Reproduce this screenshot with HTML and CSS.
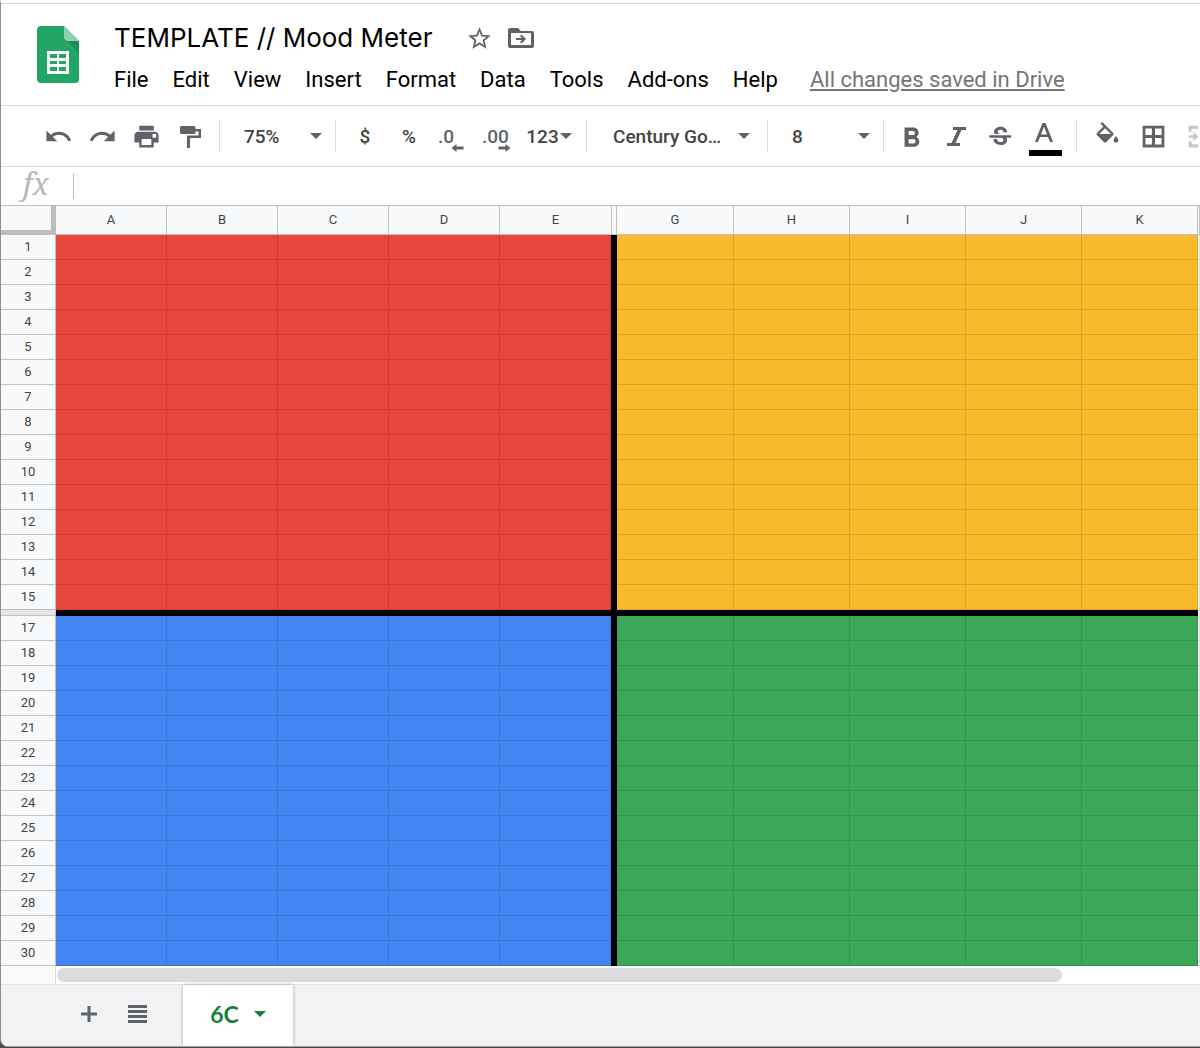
FILE: index.html
```html
<!DOCTYPE html>
<html lang="en">
<head>
    <meta charset="UTF-8">
    <meta name="viewport" content="width=device-width, initial-scale=1.0">
    <title>TEMPLATE // Mood Meter</title>
    <link rel="stylesheet" href="styles.css">
</head>
<body>
    <div class="window">
        <header class="header">
            <svg class="logo" viewBox="0 0 42 57" aria-hidden="true">
                <path fill="#23a566" d="M4 0h23l15 15v38a4 4 0 0 1-4 4H4a4 4 0 0 1-4-4V4a4 4 0 0 1 4-4z"/>
                <path fill="#1c8f57" d="M29 14l13 13V15z"/>
                <path fill="#8ed1b1" d="M27 0l15 15H31a4 4 0 0 1-4-4z"/>
                <path fill="#fff" d="M10 25h22v23H10z"/>
                <path fill="#23a566" d="M13 28h7v4h-7zM22 28h7v4h-7zM13 35h7v3h-7zM22 35h7v3h-7zM13 41h7v4h-7zM22 41h7v4h-7z"/>
            </svg>
            <div class="header-main">
                <div class="title-row">
                    <h1>TEMPLATE // Mood Meter</h1>
                    <button class="title-btn" type="button" aria-label="Star">
                        <svg width="27" height="27" viewBox="0 0 24 24"><path d="M22 9.24l-7.19-.62L12 2 9.19 8.63 2 9.24l5.46 4.73L5.82 21 12 17.27 18.18 21l-1.63-7.03L22 9.24zM12 15.4l-3.76 2.27 1-4.28-3.32-2.88 4.38-.38L12 6.1l1.71 4.04 4.38.38-3.32 2.88 1 4.28L12 15.4z"/></svg>
                    </button>
                    <button class="title-btn" type="button" aria-label="Move">
                        <svg width="26" height="22" viewBox="0 0 26 22"><path fill-rule="evenodd" d="M2 1h8l3 3h11a2 2 0 0 1 2 2v13a2 2 0 0 1-2 2H2a2 2 0 0 1-2-2V3a2 2 0 0 1 2-2zM3 6v12h20V6zM8 11h6l-2-2 1.500-1.500L18 12l-4.500 4.500L12 15l2-2H8z"/></svg>
                    </button>
                </div>
                <nav class="menu">
                    <button type="button">File</button>
                    <button type="button">Edit</button>
                    <button type="button">View</button>
                    <button type="button">Insert</button>
                    <button type="button">Format</button>
                    <button type="button">Data</button>
                    <button type="button">Tools</button>
                    <button type="button">Add-ons</button>
                    <button type="button">Help</button>
                    <a class="saved" href="#">All changes saved in Drive</a>
                </nav>
            </div>
        </header>

        <div class="toolbar">
            <button type="button" aria-label="Undo"><svg class="icon" viewBox="0 0 24 24"><path d="M12.5 8c-2.65 0-5.05.99-6.9 2.6L2 7v9h9l-3.62-3.62c1.39-1.16 3.16-1.88 5.12-1.88 3.54 0 6.55 2.31 7.6 5.5l2.37-.78C21.08 11.03 17.15 8 12.5 8z"/></svg></button>
            <button type="button" aria-label="Redo"><svg class="icon" viewBox="0 0 24 24"><path d="M18.4 10.6C16.55 8.99 14.15 8 11.5 8c-4.65 0-8.58 3.03-9.96 7.22L3.9 16c1.05-3.19 4.05-5.5 7.6-5.5 1.95 0 3.73.72 5.12 1.88L13 16h9V7l-3.6 3.6z"/></svg></button>
            <button type="button" aria-label="Print"><svg class="icon" viewBox="0 0 24 24"><path d="M19 8H5c-1.66 0-3 1.34-3 3v6h4v4h12v-4h4v-6c0-1.66-1.34-3-3-3zm-3 11H8v-5h8v5zm3-6h-2v-3h3v3zM18 3H6v4h12V3z"/></svg></button>
            <button type="button" aria-label="Paint format"><svg class="icon" viewBox="0 0 29 29"><path d="M5 4h13a1.500 1.500 0 0 1 1.500 1.500V7H25v9H14v10h-3V13.500h11.500v-4h-3v1A1.500 1.500 0 0 1 18 12H5.500A1.500 1.500 0 0 1 4 10.500v-5A1.500 1.500 0 0 1 5 4z"/></svg></button>
            <span class="divider"></span>
            <label class="dropdown zoom">
                <select aria-label="Zoom"><option>75%</option><option>100%</option></select>
                <svg class="arrow" viewBox="0 0 12 6"><path d="M0 0h12L6 6z"/></svg>
            </label>
            <span class="divider"></span>
            <button type="button">$</button>
            <button type="button">%</button>
            <button class="decimal" type="button" aria-label="Decrease decimal places">.0<svg class="shift" viewBox="0 0 12 8"><path d="M0 4l5-4v2.500h7v3H5V8z"/></svg></button>
            <button class="decimal wide-shift" type="button" aria-label="Increase decimal places">.00<svg class="shift" viewBox="0 0 12 8"><path d="M12 4L7 0v2.500H0v3h7V8z"/></svg></button>
            <button class="formats" type="button">123<svg class="arrow" viewBox="0 0 12 6"><path d="M0 0h12L6 6z"/></svg></button>
            <span class="divider"></span>
            <label class="dropdown font">
                <select aria-label="Font"><option>Century Go…</option><option>Arial</option></select>
                <svg class="arrow" viewBox="0 0 12 6"><path d="M0 0h12L6 6z"/></svg>
            </label>
            <span class="divider"></span>
            <label class="dropdown size">
                <select aria-label="Font size"><option>8</option><option>10</option></select>
                <svg class="arrow" viewBox="0 0 12 6"><path d="M0 0h12L6 6z"/></svg>
            </label>
            <span class="divider"></span>
            <button type="button" aria-label="Bold"><svg class="icon" viewBox="3 0 21 21"><path d="M15.6 10.79c.97-.67 1.65-1.77 1.65-2.79 0-2.26-1.75-4-4-4H7v14h7.04c2.09 0 3.71-1.7 3.71-3.79 0-1.52-.86-2.82-2.15-3.42zM10 6.5h3c.83 0 1.5.67 1.5 1.5s-.67 1.5-1.5 1.5h-3v-3zm3.5 9H10v-3h3.500c.83 0 1.5.67 1.5 1.5s-.67 1.5-1.5 1.5z"/></svg></button>
            <button type="button" aria-label="Italic"><svg class="icon" viewBox="1 0 29 29"><path d="M11 5h13v3h-4.500l-6 13H18v3H5v-3h4.500l6-13H11z"/></svg></button>
            <button type="button" aria-label="Strikethrough"><svg class="icon" viewBox="1 -1 24 24"><path d="M7.24 8.75c-.26-.48-.39-1.03-.39-1.67 0-.61.13-1.16.4-1.67.26-.5.63-.93 1.11-1.29.48-.35 1.05-.63 1.7-.83.66-.19 1.39-.29 2.18-.29.81 0 1.54.11 2.21.34.66.22 1.23.54 1.69.94.47.4.83.88 1.08 1.43.25.55.38 1.15.38 1.81h-3.01c0-.31-.05-.59-.15-.85-.09-.27-.24-.49-.44-.68-.2-.19-.45-.33-.75-.44-.3-.1-.66-.16-1.06-.16-.39 0-.74.04-1.03.13-.29.09-.53.21-.72.36-.19.16-.34.34-.44.55-.1.21-.15.43-.15.66 0 .48.25.88.74 1.21.38.25.77.48 1.41.7H7.39c-.05-.08-.11-.17-.15-.25zM21 12v-2H3v2h9.62c.18.07.4.14.55.2.37.17.66.34.87.51.21.17.35.36.43.57.07.2.11.43.11.69 0 .23-.05.45-.14.66-.09.2-.23.38-.42.53-.19.15-.42.26-.71.35-.29.08-.63.13-1.01.13-.43 0-.83-.04-1.18-.13s-.66-.23-.91-.42c-.25-.19-.45-.44-.59-.75-.14-.31-.25-.76-.25-1.21H6.4c0 .55.08 1.13.24 1.58.16.45.37.85.65 1.21.28.35.6.66.98.92.37.26.78.48 1.22.65.44.17.9.3 1.38.39.48.08.96.13 1.44.13.8 0 1.53-.09 2.18-.28s1.21-.45 1.67-.79c.46-.34.82-.77 1.07-1.27s.38-1.07.38-1.71c0-.6-.1-1.14-.31-1.61-.05-.11-.11-.23-.17-.33H21z"/></svg></button>
            <button class="wide text-color" type="button" aria-label="Text color"><svg viewBox="0 0 34 40"><path d="M13.500 7h3l7.500 19h-3l-2-5h-8l-2 5H6zm1.500 3.500l-3 8h6z"/><path fill="#000" d="M0 34h33v6H0z"/></svg></button>
            <span class="divider"></span>
            <button class="wide" type="button" aria-label="Fill color"><svg class="icon" viewBox="0 0 24 24"><path d="M16.56 8.94L7.62 0 6.21 1.41l2.38 2.38-5.15 5.15c-.59.59-.59 1.54 0 2.12l5.5 5.5c.29.29.68.44 1.06.44s.77-.15 1.06-.44l5.500-5.500c.59-.58.59-1.53 0-2.12zM5.210 10L10 5.210 14.790 10H5.210zM19 11.500s-2 2.170-2 3.500c0 1.100.9 2 2 2s2-.9 2-2c0-1.330-2-3.500-2-3.500z"/></svg></button>
            <button class="wide" type="button" aria-label="Borders"><svg class="icon" viewBox="0 0 24 24"><path d="M3 3v18h18V3H3zm7.700 15.700H5.300v-5.400h5.400zm0-8H5.300V5.300h5.400zm8 8h-5.400v-5.400h5.400zm0-8h-5.400V5.300h5.400z"/></svg></button>
            <button class="wide" type="button" aria-label="Merge cells" disabled><svg class="icon" viewBox="0 0 24 24"><path d="M3 3h8v2.500H5.500V8H3zM13 3h8v5h-2.500V5.500H13zM3 16h2.500v2.500H11V21H3zM18.500 16H21v5h-8v-2.500h5.500zM3 11h4V8l4 4-4 4v-3H3zM21 11h-4V8l-4 4 4 4v-3h4z"/></svg></button>
        </div>

        <div class="formula-bar">
            <label class="fx" for="formula">fx</label>
            <input type="text" id="formula">
        </div>

        <main class="sheet">
            <table>
                <colgroup>
                    <col class="col-head">
                    <col class="col-left" span="5">
                    <col class="col-thin">
                    <col class="col-first">
                    <col class="col-right" span="4">
                    <col>
                </colgroup>
                <thead>
                    <tr>
                        <th class="corner"></th>
                        <th>A</th><th>B</th><th>C</th><th>D</th><th class="before-axis">E</th>
                        <th class="thin"></th>
                        <th>G</th><th>H</th><th>I</th><th>J</th><th>K</th>
                        <th></th>
                    </tr>
                </thead>
                <tbody id="rows"></tbody>
            </table>
        </main>

        <div class="scroll-row">
            <div class="scroll-corner"></div>
            <div class="scroll-track"><div class="scroll-thumb"></div></div>
        </div>

        <footer class="tabs">
            <button type="button" aria-label="Add sheet"><svg width="16" height="16" viewBox="0 0 16 16"><path d="M6.500 0h3v6.500H16v3H9.500V16h-3V9.500H0v-3h6.500z"/></svg></button>
            <button type="button" aria-label="All sheets"><svg width="19" height="18" viewBox="0 0 19 18"><path d="M0 0h19v3H0zM0 5h19v3H0zM0 10h19v3H0zM0 15h19v3H0z"/></svg></button>
            <button class="tab" type="button">6C<svg class="arrow" viewBox="0 0 12 6"><path d="M0 0h12L6 6z"/></svg></button>
        </footer>
    </div>

    <script>
        const rows = document.getElementById('rows');
        const AXIS_ROW = 16;
        const LAST_ROW = 30;
        const COLUMNS = 'ABCDEFGHIJK';

        // Pick the quadrant colour for a cell
        function cellClass(row, column) {
            if (row === AXIS_ROW || column === 'F') {
                return 'axis';
            }
            const left = column < 'F';
            if (row < AXIS_ROW) {
                return left ? 'red' : 'yellow';
            }
            return left ? 'blue' : 'green';
        }

        for (let row = 1; row <= LAST_ROW; row++) {
            const tr = document.createElement('tr');
            if (row === AXIS_ROW) {
                tr.className = 'axis-row';
            }
            let html = `<th>${row === AXIS_ROW ? '' : row}</th>`;
            for (const column of COLUMNS) {
                html += `<td class="${cellClass(row, column)}"></td>`;
            }
            tr.innerHTML = html + '<td></td>';
            rows.appendChild(tr);
        }
    </script>
</body>
</html>
```
FILE: styles.css
```css
* {
    box-sizing: border-box;
}
body {
    margin: 0;
    background-color: #4a4a4c;
    font-family: Roboto, "Liberation Sans", sans-serif;
    color: #000;
}
button, select, input {
    font: inherit;
    color: inherit;
    background: none;
    border: none;
    padding: 0;
    margin: 0;
}
button, select {
    cursor: pointer;
}
svg {
    display: block;
    flex: none;
    fill: #5f6368;
}
.window {
    background-color: #fff;
    border-top: 3px solid #fff;
    border-left: 1px solid #8e8e8e;
    border-bottom: 1px solid #a0a0a0;
    border-radius: 0 0 0 8px;
    overflow: hidden;
}

/* Title and menus */
.header {
    display: flex;
    gap: 35px;
    padding: 15px 0 6px 36px;
    border-top: 1px solid #d4d4d4;
    border-bottom: 1px solid #dadada;
}
.logo {
    width: 42px;
    height: 57px;
    margin-top: 7px;
}
.title-row {
    display: flex;
    align-items: center;
    height: 38px;
}
h1 {
    margin: 0 34px 0 0;
    font-family: Inter, Roboto, sans-serif;
    font-size: 26px;
    font-weight: 400;
    line-height: 38px;
    white-space: nowrap;
}
.title-btn {
    margin-right: 15px;
}
.menu {
    display: flex;
    gap: 24px;
    align-items: center;
    height: 38px;
    margin-top: 4px;
    font-size: 22px;
    line-height: 38px;
    white-space: nowrap;
}
.saved {
    margin-left: 8px;
    color: #757575;
}

/* Toolbar */
.toolbar {
    display: flex;
    align-items: center;
    height: 61px;
    padding-left: 35px;
    border-bottom: 1px solid #dadada;
    font-size: 19px;
    font-weight: 500;
    color: #444;
    overflow: hidden;
}
.toolbar button {
    display: flex;
    flex: none;
    align-items: center;
    justify-content: center;
    width: 44px;
    height: 44px;
}
.toolbar .wide {
    width: 46px;
}
.toolbar .formats {
    width: 60px;
    gap: 1px;
}
.icon {
    width: 29px;
    height: 29px;
}
.arrow {
    width: 12px;
    height: 6px;
}
.divider {
    flex: none;
    width: 1px;
    height: 32px;
    margin: 0 7px;
    background-color: #dadce0;
}
.dropdown {
    display: flex;
    flex: none;
    align-items: center;
    padding: 0 6px 0 17px;
}
.dropdown select {
    flex: 1;
    min-width: 0;
    appearance: none;
    outline: none;
}
.zoom {
    width: 101px;
}
.font {
    width: 166px;
    padding: 0 10px 0 19px;
}
.size {
    width: 101px;
}
.toolbar .decimal {
    position: relative;
    justify-content: flex-start;
    padding-left: 7px;
    color: #5f6368;
}
.shift {
    position: absolute;
    right: 11px;
    bottom: 6px;
    width: 13px;
    height: 8px;
}
.wide-shift .shift {
    right: 8px;
}
.toolbar .text-color svg {
    width: 34px;
    height: 40px;
}
button:disabled svg {
    fill: #c4c6c8;
}

/* Formula bar */
.formula-bar {
    display: flex;
    align-items: center;
    height: 39px;
    border-bottom: 1px solid #c0c0c0;
}
.fx {
    width: 72px;
    padding: 0 0 5px 22px;
    font-family: "Noto Serif", "Liberation Serif", serif;
    font-size: 30px;
    font-style: italic;
    line-height: 30px;
    color: #b7b7b7;
}
.formula-bar input {
    flex: 1;
    height: 26px;
    padding-left: 12px;
    border-left: 1px solid #c0c0c0;
    font-size: 20px;
    outline: none;
}

/* Grid */
.sheet {
    overflow: hidden;
}
table {
    width: 100%;
    min-width: 1199px;
    table-layout: fixed;
    border-collapse: separate;
    border-spacing: 0;
}
.col-head {
    width: 55px;
}
.col-left {
    width: 111px;
}
.col-thin {
    width: 6px;
}
.col-first {
    width: 117px;
}
.col-right {
    width: 116px;
}
th {
    height: 25px;
    padding: 0;
    background-color: #f8f9fa;
    border-right: 1px solid #c0c0c0;
    border-bottom: 1px solid #c0c0c0;
    font-size: 13px;
    font-weight: 400;
    line-height: 16px;
    color: #444;
}
thead th {
    height: 29px;
}
thead .corner {
    border-right: 5px solid #bcbebe;
    border-bottom: 5px solid #bcbebe;
}
thead .before-axis {
    border-right: none;
}
thead .thin {
    border-left: 1px solid #c0c0c0;
}
td {
    padding: 0;
    border-right: 1px solid rgba(0, 0, 0, 0.12);
    border-bottom: 1px solid rgba(0, 0, 0, 0.12);
}
.red {
    background-color: #e8453c;
}
.yellow {
    background-color: #f9ba2d;
}
.blue {
    background-color: #4486f1;
}
.green {
    background-color: #3ba757;
}
.axis {
    background-color: #000;
    border-color: #000;
}
.axis-row th {
    height: 6px;
    line-height: 0;
    background-color: #e4e6e8;
}

/* Scrollbar */
.scroll-row {
    display: flex;
    height: 18px;
}
.scroll-corner {
    width: 55px;
    background-color: #fafafa;
    border-right: 1px solid #dadada;
}
.scroll-track {
    flex: 1;
    padding: 2px 1px;
}
.scroll-thumb {
    width: 88%;
    height: 14px;
    border-radius: 7px;
    background-color: #dadce0;
}

/* Sheet tabs */
.tabs {
    display: flex;
    align-items: stretch;
    gap: 31px;
    height: 62px;
    padding-left: 80px;
    background-color: #f1f3f4;
    border-top: 1px solid #e2e3e4;
}
.tabs button {
    display: flex;
    align-items: center;
    padding-bottom: 4px;
}
.tabs .tab {
    justify-content: center;
    gap: 15px;
    width: 110px;
    margin-left: 5px;
    background-color: #fff;
    box-shadow: 0 0 4px rgba(0, 0, 0, 0.3);
    font-family: Lato, Roboto, sans-serif;
    font-size: 23px;
    font-weight: 700;
    color: #188038;
}
.tab svg {
    fill: #188038;
}
```
